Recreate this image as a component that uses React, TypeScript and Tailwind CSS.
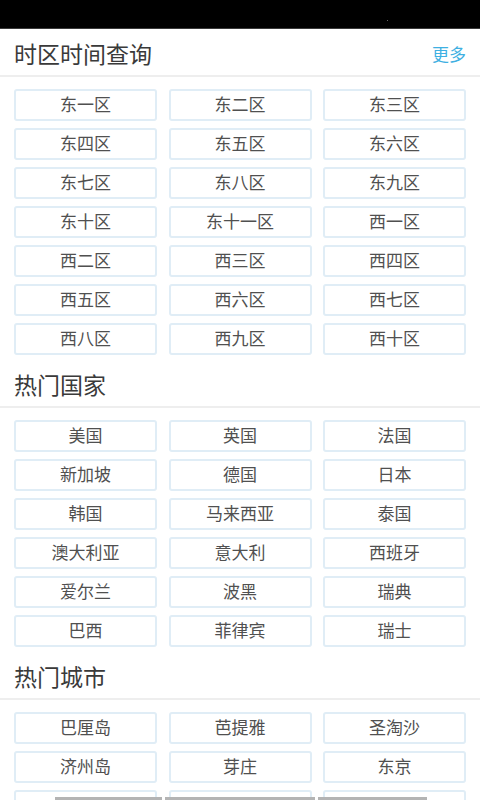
import React from 'react';

const zones = [
  '东一区', '东二区', '东三区',
  '东四区', '东五区', '东六区',
  '东七区', '东八区', '东九区',
  '东十区', '东十一区', '西一区',
  '西二区', '西三区', '西四区',
  '西五区', '西六区', '西七区',
  '西八区', '西九区', '西十区',
];

const countries = [
  '美国', '英国', '法国',
  '新加坡', '德国', '日本',
  '韩国', '马来西亚', '泰国',
  '澳大利亚', '意大利', '西班牙',
  '爱尔兰', '波黑', '瑞典',
  '巴西', '菲律宾', '瑞士',
];

const cities = [
  '巴厘岛', '芭提雅', '圣淘沙',
  '济州岛', '芽庄', '东京',
  '巴黎', '伦敦', '纽约',
];

const font = { fontFamily: '"Noto Sans CJK SC", "Noto Sans", sans-serif' };

const SectionHeader: React.FC<{ title: string; more?: boolean }> = ({ title, more }) => (
  <div className="flex h-[48px] items-center justify-between border-b-2 border-[#eeeeee] px-[14px] pt-[3px]">
    <span className="text-[23px] leading-none text-[#3a3a3a]">{title}</span>
    {more && <span className="text-[17px] leading-none text-[#3fb0e2]">更多</span>}
  </div>
);

const ItemGrid: React.FC<{ items: string[] }> = ({ items }) => (
  <div className="grid grid-cols-3 gap-x-[11.5px] gap-y-[7px] px-[14px] pb-[5px] pt-[12px]">
    {items.map((item) => (
      <button
        key={item}
        className="flex h-[32px] items-center justify-center rounded-[3px] border-2 border-[#e0edf6] bg-white pb-[4px] text-[17px] leading-none text-[#505050]"
      >
        {item}
      </button>
    ))}
  </div>
);

export default function App() {
  return (
    <div className="relative h-[800px] w-[480px] overflow-hidden bg-white" style={font}>
      <div className="flex h-[29px] items-start justify-end border-b border-[#3a3a3a] bg-black pr-[92px] pt-[20px]">
        <span className="h-px w-px bg-[#666]" />
      </div>

      <SectionHeader title="时区时间查询" more />
      <ItemGrid items={zones} />

      <SectionHeader title="热门国家" />
      <ItemGrid items={countries} />

      <SectionHeader title="热门城市" />
      <ItemGrid items={cities} />

      {/* overlay strip peeking in at the bottom edge */}
      <div className="absolute inset-x-0 bottom-0 flex h-[3px] gap-[3px] pl-[55px]">
        <div className="w-[107px] bg-[#b4b4b4]" />
        <div className="w-[150px] bg-[#b4b4b4]" />
        <div className="w-[109px] bg-[#b4b4b4]" />
      </div>
    </div>
  );
}
